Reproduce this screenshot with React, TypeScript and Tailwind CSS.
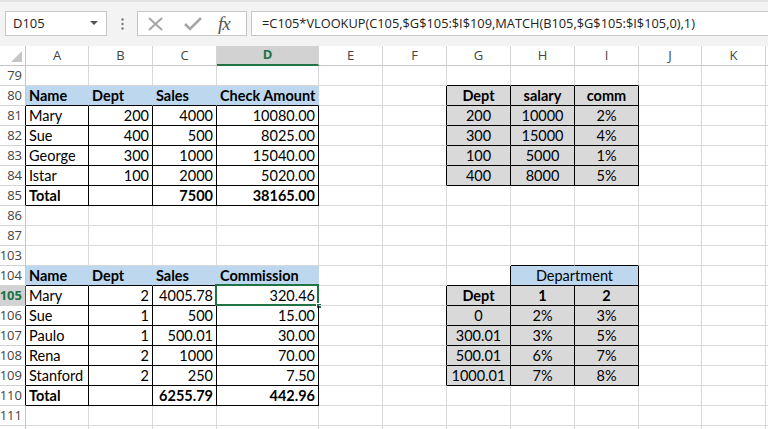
import clsx from 'clsx';

type Cell = {
  t?: string;
  a?: 'l' | 'r' | 'c';
  bold?: boolean;
  fill?: 'blue' | 'gray';
  r?: boolean;
  b?: boolean;
  w?: string;
  sel?: boolean;
};

const widths = [
  'w-[63px]',
  'w-[64px]',
  'w-[64px]',
  'w-[102px]',
  'w-[64px]',
  'w-[64px]',
  'w-[64px]',
  'w-[64px]',
  'w-[64px]',
  'w-[63px]',
  'w-[64px]',
  'w-[40px]',
];
const letters = ['A', 'B', 'C', 'D', 'E', 'F', 'G', 'H', 'I', 'J', 'K', ''];

function SheetCell({ c, idx }: { c: Cell; idx: number }) {
  return (
    <div
      className={clsx(
        'relative h-[20px] shrink-0 border-r border-b flex items-end pb-[1px] px-[3px] text-[14.5px] leading-[16px] text-black whitespace-nowrap overflow-visible',
        c.w ?? widths[idx],
        c.fill === 'blue' && 'bg-[#bdd7ee]',
        c.fill === 'gray' && 'bg-[#d9d9d9]',
        c.r ? 'border-r-black' : c.fill === 'blue' ? 'border-r-[#bdd7ee]' : 'border-r-[#d9d9d9]',
        c.b ? 'border-b-black' : 'border-b-[#d9d9d9]',
        c.a === 'r' && 'justify-end',
        c.a === 'c' && 'justify-center',
        c.bold && 'font-bold'
      )}
    >
      {c.t}
      {c.sel && (
        <>
          <div className="absolute -left-[2px] -top-[2px] -right-[1px] -bottom-[1px] border-2 border-[#217346]" />
          <div className="absolute -right-[4px] -bottom-[4px] w-[6px] h-[6px] bg-[#217346] border border-white" />
        </>
      )}
    </div>
  );
}

function Row({
  n,
  cells = {},
  hdrR,
  active,
}: {
  n?: number;
  cells?: Record<number, Cell>;
  hdrR?: boolean;
  active?: boolean;
}) {
  return (
    <div className="flex">
      <div
        className={clsx(
          'h-[20px] w-[26px] shrink-0 border-r border-b border-b-[#d4d4d4] flex items-center justify-end pr-[3px] text-[13px] font-["Open_Sans",sans-serif]',
          active ? 'bg-[#d2d2d2] text-[#217346] font-bold border-r-[#217346]' : 'bg-white text-[#444]',
          !active && (hdrR ? 'border-r-black' : 'border-r-[#c6c6c6]')
        )}
      >
        {n}
      </div>
      {widths.map((_, i) => {
        const c = cells[i];
        if (c === null) return null;
        return <SheetCell key={i} idx={i} c={c ?? {}} />;
      })}
    </div>
  );
}

const A = 0, B = 1, C = 2, D = 3, F = 5, G = 6, H = 7, I = 8;

function blueHead(names: string[]): Record<number, Cell> {
  return {
    [A]: { t: names[0], bold: true, fill: 'blue', b: true },
    [B]: { t: names[1], bold: true, fill: 'blue', b: true },
    [C]: { t: names[2], bold: true, fill: 'blue', b: true },
    [D]: { t: names[3], bold: true, fill: 'blue', b: true, r: false },
  };
}

function dataRow(v: string[], bold = false): Record<number, Cell> {
  return {
    [A]: { t: v[0], bold, r: true, b: true },
    [B]: { t: v[1], a: 'r', bold, r: true, b: true },
    [C]: { t: v[2], a: 'r', bold, r: true, b: true },
    [D]: { t: v[3], a: 'r', bold, r: true, b: true },
  };
}

function grayRow(v: string[], bold = false): Record<number, Cell> {
  return {
    [F]: { r: true },
    [G]: { t: v[0], a: 'c', bold, fill: 'gray', r: true, b: true },
    [H]: { t: v[1], a: 'c', bold, fill: 'gray', r: true, b: true },
    [I]: { t: v[2], a: 'c', bold, fill: 'gray', r: true, b: true },
  };
}

export default function App() {
  return (
    <div className="w-[768px] h-[429px] overflow-hidden bg-white font-['Lato',sans-serif]">
      {/* formula bar */}
      <div className="h-[46px] bg-[#f3f3f3] border-t-[2px] border-t-[#e2e2e2] flex items-start pt-[9px] pl-[5px] font-['Open_Sans',sans-serif]">
        <div className="w-[102px] h-[25px] bg-white border border-[#c6c6c6] flex items-center justify-between pl-[7px] pr-[8px] text-[13px] text-[#222]">
          <span>D105</span>
          <svg width="8" height="5" viewBox="0 0 8 5">
            <polygon points="0,0 8,0 4,4" fill="#555" />
          </svg>
        </div>
        <div className="w-[30px] h-[25px] flex items-center justify-center">
          <svg width="3" height="12" viewBox="0 0 3 12">
            <circle cx="1.5" cy="1.5" r="1.2" fill="#777" />
            <circle cx="1.5" cy="6" r="1.2" fill="#777" />
            <circle cx="1.5" cy="10.5" r="1.2" fill="#777" />
          </svg>
        </div>
        <div className="w-[110px] h-[25px] bg-white border border-[#c6c6c6] flex items-center">
          <svg className="ml-[8px]" width="20" height="16" viewBox="0 0 20 16">
            <path d="M3 2 L16 14 M16 2 L3 14" stroke="#a6a6a6" strokeWidth="2" />
          </svg>
          <svg className="ml-[17px]" width="20" height="16" viewBox="0 0 20 16">
            <path d="M2 8 L7 13 L18 2" stroke="#a6a6a6" strokeWidth="2.6" fill="none" />
          </svg>
          <span className="ml-[15px] font-['Liberation_Serif',serif] italic text-[19px] text-[#555] leading-none tracking-[-1px]">
            fx
          </span>
        </div>
        <div className="ml-[4px] flex-1 h-[25px] bg-white border border-[#c6c6c6] border-r-0 flex items-center pl-[10px] text-[12.8px] text-[#222] whitespace-nowrap">
          =C105*VLOOKUP(C105,$G$105:$I$109,MATCH(B105,$G$105:$I$105,0),1)
        </div>
      </div>

      {/* column headers */}
      <div className="flex h-[20px] font-['Open_Sans',sans-serif] text-[13px] text-[#444]">
        <div className="w-[26px] shrink-0 border-r border-b border-[#c6c6c6] bg-white flex items-end justify-end p-[3px]">
          <svg width="11" height="11" viewBox="0 0 11 11">
            <polygon points="11,0 11,11 0,11" fill="#c6c6c6" />
          </svg>
        </div>
        {widths.map((w, i) => (
          <div
            key={i}
            className={clsx(
              'shrink-0 border-r border-r-[#d4d4d4] flex items-center justify-center',
              w,
              i === D
                ? 'bg-[#d2d2d2] text-[#217346] font-bold border-b-2 border-b-[#217346]'
                : 'bg-white border-b border-b-[#c6c6c6]'
            )}
          >
            {letters[i]}
          </div>
        ))}
      </div>

      <Row n={79} cells={{ [G]: { b: true }, [H]: { b: true }, [I]: { b: true } }} />
      <Row n={80} cells={{ ...blueHead(['Name', 'Dept', 'Sales', 'Check Amount']), ...grayRow(['Dept', 'salary', 'comm'], true) }} />
      <Row n={81} hdrR cells={{ ...dataRow(['Mary', '200', '4000', '10080.00']), ...grayRow(['200', '10000', '2%']) }} />
      <Row n={82} hdrR cells={{ ...dataRow(['Sue', '400', '500', '8025.00']), ...grayRow(['300', '15000', '4%']) }} />
      <Row n={83} hdrR cells={{ ...dataRow(['George', '300', '1000', '15040.00']), ...grayRow(['100', '5000', '1%']) }} />
      <Row n={84} hdrR cells={{ ...dataRow(['Istar', '100', '2000', '5020.00']), ...grayRow(['400', '8000', '5%']) }} />
      <Row n={85} hdrR cells={dataRow(['Total', '', '7500', '38165.00'], true)} />
      <Row n={86} />
      <Row n={87} />
      <Row n={103} cells={{ [H]: { b: true }, [I]: { b: true } }} />
      <Row
        n={104}
        cells={{
          ...blueHead(['Name', 'Dept', 'Sales', 'Commission']),
          [G]: { r: true, b: true },
          [H]: { t: 'Department', a: 'c', fill: 'blue', r: true, b: true, w: 'w-[128px]' },
          [I]: null as unknown as Cell,
        }}
      />
      <Row
        n={105}
        hdrR
        active
        cells={{
          ...dataRow(['Mary', '2', '4005.78', '320.46']),
          [D]: { t: '320.46', a: 'r', r: true, b: true, sel: true },
          ...grayRow(['Dept', '1', '2'], true),
        }}
      />
      <Row n={106} hdrR cells={{ ...dataRow(['Sue', '1', '500', '15.00']), ...grayRow(['0', '2%', '3%']) }} />
      <Row n={107} hdrR cells={{ ...dataRow(['Paulo', '1', '500.01', '30.00']), ...grayRow(['300.01', '3%', '5%']) }} />
      <Row n={108} hdrR cells={{ ...dataRow(['Rena', '2', '1000', '70.00']), ...grayRow(['500.01', '6%', '7%']) }} />
      <Row n={109} hdrR cells={{ ...dataRow(['Stanford', '2', '250', '7.50']), ...grayRow(['1000.01', '7%', '8%']) }} />
      <Row n={110} hdrR cells={dataRow(['Total', '', '6255.79', '442.96'], true)} />
      <Row n={111} />
      <Row />
    </div>
  );
}
